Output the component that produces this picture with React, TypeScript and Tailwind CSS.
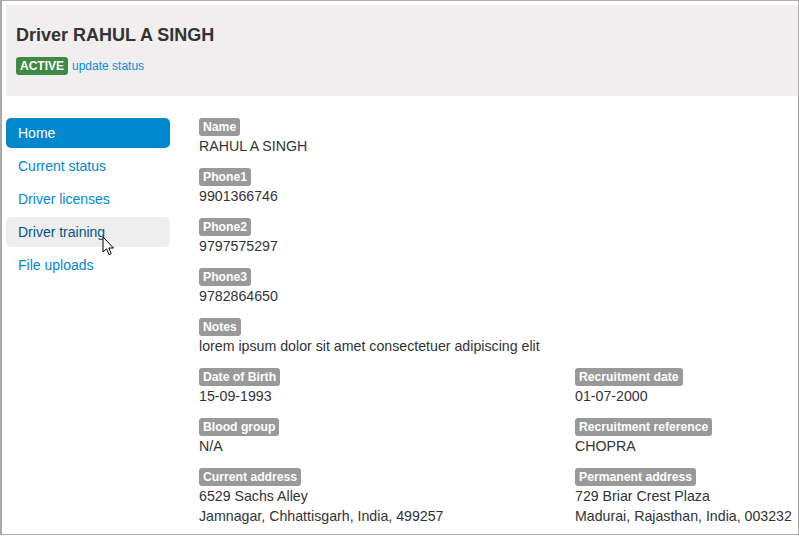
import React from "react";

function Field({ label, lines }: { label: string; lines: string[] }) {
  return (
    <div className="mb-[12px]">
      <div className="h-[18px] flex">
        <span className="bg-[#999999] text-white font-bold text-[12.2px] leading-[18px] px-[4px] rounded-[3px]">
          {label}
        </span>
      </div>
      {lines.map((l, i) => (
        <div key={i} className="text-[14.2px] leading-[20px] text-[#333333] whitespace-nowrap">
          {l}
        </div>
      ))}
    </div>
  );
}

export default function App() {
  const nav = ["Home", "Current status", "Driver licenses", "Driver training", "File uploads"];
  return (
    <div className="w-[799px] h-[536px] bg-white overflow-hidden" style={{ fontFamily: '"Liberation Sans", Arial, sans-serif' }}>
      <div className="relative w-[799px] h-[535px] border border-[#aaaaaa] border-l-2 overflow-hidden bg-white">
        <div className="pl-[4px] pt-[4px] w-[900px]">
          <div className="bg-[#f0eeef] pt-[20px] pb-[21px] pl-[10px]">
            <h1 className="text-[18px] leading-[20px] font-bold text-[#333333]">Driver RAHUL A SINGH</h1>
            <div className="mt-[12px] flex items-center gap-[4px] h-[18px]">
              <span className="bg-[#3f8a43] text-white font-bold text-[12px] leading-[18px] px-[4px] rounded-[3px]">ACTIVE</span>
              <span className="text-[#0a8fd0] text-[12px] leading-[18px]">update status</span>
            </div>
          </div>
          <div className="flex mt-[22px]">
            <div className="w-[164px] shrink-0 flex flex-col gap-[3px]">
              {nav.map((n) => (
                <div
                  key={n}
                  className={
                    "h-[30px] px-[12px] py-[8px] text-[14px] leading-[14px] rounded-[5px] whitespace-nowrap " +
                    (n === "Home"
                      ? "bg-[#0088cc] text-white"
                      : n === "Driver training"
                      ? "bg-[#eeeeee] text-[#005580]"
                      : "text-[#0088cc]")
                  }
                >
                  {n}
                </div>
              ))}
            </div>
            <div className="ml-[29px] w-[752px] shrink-0">
              <Field label="Name" lines={["RAHUL A SINGH"]} />
              <Field label="Phone1" lines={["9901366746"]} />
              <Field label="Phone2" lines={["9797575297"]} />
              <Field label="Phone3" lines={["9782864650"]} />
              <Field label="Notes" lines={["lorem ipsum dolor sit amet consectetuer adipiscing elit"]} />
              <div className="grid grid-cols-[376px_376px]">
                <Field label="Date of Birth" lines={["15-09-1993"]} />
                <Field label="Recruitment date" lines={["01-07-2000"]} />
                <Field label="Blood group" lines={["N/A"]} />
                <Field label="Recruitment reference" lines={["CHOPRA"]} />
                <Field label="Current address" lines={["6529 Sachs Alley", "Jamnagar, Chhattisgarh, India, 499257"]} />
                <Field label="Permanent address" lines={["729 Briar Crest Plaza", "Madurai, Rajasthan, India, 003232"]} />
              </div>
            </div>
          </div>
        </div>
        <svg className="absolute left-[100px] top-[235px]" width="14" height="21" viewBox="0 0 14 21">
          <path d="M1 1 L1 16 L4.5 12.8 L7 18.5 L9.2 17.5 L6.8 12 L11.5 12 Z" fill="#ffffff" stroke="#000000" strokeWidth="1" strokeLinejoin="round" />
        </svg>
      </div>
    </div>
  );
}
